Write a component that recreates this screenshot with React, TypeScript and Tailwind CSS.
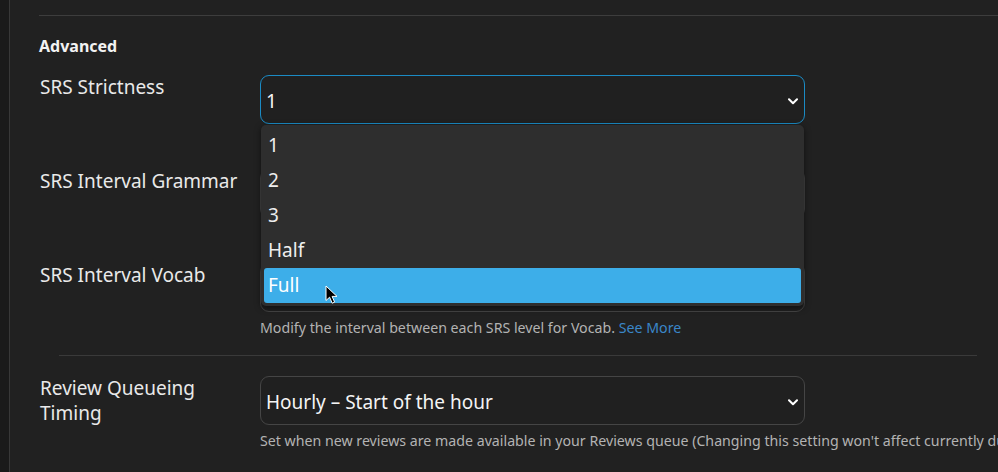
import React from 'react';

const font = { fontFamily: '"Noto Sans", sans-serif' };

function Chevron() {
  return (
    <svg width="10" height="7" viewBox="0 0 10 7" className="shrink-0">
      <path d="M1 1.2 L5 5.2 L9 1.2" fill="none" stroke="#ffffff" strokeWidth="2" strokeLinecap="round" strokeLinejoin="round" />
    </svg>
  );
}

function Cursor() {
  return (
    <svg width="14" height="20" viewBox="0 0 14 20" className="absolute left-[325px] top-[285px]">
      <path d="M1 1 L1 15.5 L4.6 12.2 L7.2 18.2 L9.6 17.1 L7.1 11.4 L12 11.4 Z" fill="#000000" stroke="#ffffff" strokeWidth="1" strokeLinejoin="round" />
    </svg>
  );
}

interface RowProps {
  label: React.ReactNode;
  value?: string;
  focused?: boolean;
  hint?: React.ReactNode;
}

// one label + select + help text line
function SettingRow({ label, value, focused, hint }: RowProps) {
  return (
    <div className="flex">
      <div className="w-[221px] shrink-0 pl-[1px] pr-4 text-[19px] leading-[1.3] text-[#e9e9e9]">{label}</div>
      <div className="flex-1 min-w-0">
        <div
          className={
            focused
              ? 'flex h-[49px] w-[545px] items-center justify-between rounded-[9px] border border-[#1b8bc4] bg-[#202020] pl-[5px] pr-[6px] pt-[3px]'
              : 'flex h-[49px] w-[545px] items-center justify-between rounded-[9px] border border-[#454545] bg-[#202020] pl-[5px] pr-[6px] pt-[3px]'
          }
        >
          <span className="text-[19px] text-[#f4f4f4]">{value}</span>
          <Chevron />
        </div>
        <div className="mt-[5px] h-[21px] whitespace-nowrap text-[14.2px] leading-[21px] text-[#b3b3b3]">{hint}</div>
      </div>
    </div>
  );
}

export default function App() {
  const options = ['1', '2', '3', 'Half', 'Full'];
  return (
    <div className="relative flex h-[472px] w-full overflow-hidden bg-[#212121]" style={font}>
      <div className="w-[10px] shrink-0 border-r border-[#383838] bg-[#1a1a1a]" />
      <div className="flex-1 min-w-0 pl-[29px]">
        <div className="mt-[15px] h-px bg-[#3d3d3d]" />
        <h3 className="mt-[18px] text-[16px] font-bold leading-[24px] text-[#f2f2f2]">Advanced</h3>
        <div className="mt-[17px] flex flex-col gap-[19px]">
          <SettingRow label="SRS Strictness" value="1" focused />
          <SettingRow label="SRS Interval Grammar" />
          <SettingRow
            label="SRS Interval Vocab"
            hint={
              <>
                Modify the interval between each SRS level for Vocab.{' '}
                <span className="text-[#3a86c8]">See More</span>
              </>
            }
          />
        </div>
        <div className="ml-[20px] mt-[17px] h-px w-[918px] bg-[#3a3a3a]" />
        <div className="mt-[20px]">
          <SettingRow
            label={
              <>
                Review Queueing
                <br />
                Timing
              </>
            }
            value="Hourly – Start of the hour"
            hint="Set when new reviews are made available in your Reviews queue (Changing this setting won't affect currently due reviews)"
          />
        </div>
      </div>

      <div className="absolute left-[261px] top-[125px] w-[543px] rounded-[5px] bg-[#2e2e2e] p-[3px] shadow-[0_2px_6px_rgba(0,0,0,0.55)]">
        {options.map((o) => (
          <div
            key={o}
            className={
              o === 'Full'
                ? 'h-[35px] rounded-[3px] bg-[#3daee9] pl-[4px] text-[19px] leading-[35px] text-white'
                : 'h-[35px] pl-[4px] text-[19px] leading-[35px] text-[#eeeeee]'
            }
          >
            {o}
          </div>
        ))}
      </div>
      <Cursor />
    </div>
  );
}
